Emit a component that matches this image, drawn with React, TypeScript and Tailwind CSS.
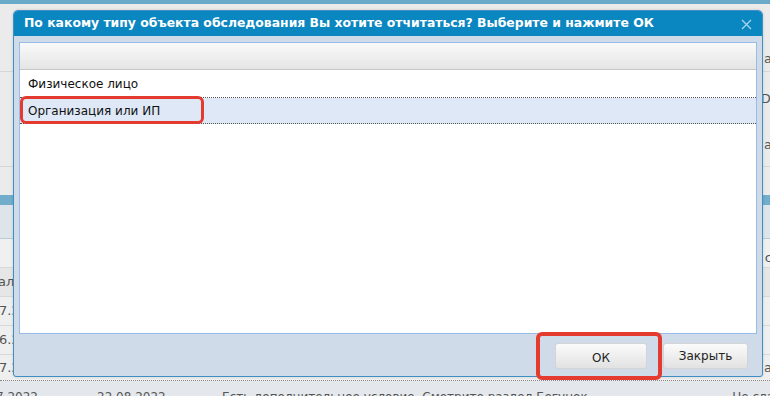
import React from "react";

const F = { fontFamily: '"DejaVu Sans", "Liberation Sans", sans-serif' };

function BgRow({ cls, left, right, leftCls = "", rightCls = "" }: { cls: string; left?: string; right?: string; leftCls?: string; rightCls?: string }) {
  return (
    <div className={`flex justify-between text-[13px] text-[#555] ${cls}`}>
      <span className={leftCls}>{left}</span>
      <span className={rightCls}>{right}</span>
    </div>
  );
}

export default function App() {
  return (
    <div className="relative h-[396px] w-[770px] overflow-hidden bg-[#e9e9e9]" style={F}>
      {/* background page */}
      <div className="flex h-full flex-col">
        <div className="h-[4px] shrink-0 bg-[#6aa9c7]" />
        <div className="h-[40px] shrink-0 bg-[#ebebeb]" />
        <BgRow cls="h-[28px] shrink-0 items-center border-b border-[#d6d6d6] bg-[#ebebeb]" right="а" rightCls="-mr-[2px] pt-[2px]" />
        <BgRow cls="h-[54px] shrink-0 items-center bg-[#ebebeb]" right="D," rightCls="-mr-[5px]" />
        <BgRow cls="h-[41px] shrink-0 items-center border-b border-[#d6d6d6] bg-[#ebebeb]" right="а" rightCls="-mr-[2px] pb-[2px]" />
        <div className="h-[28px] shrink-0 bg-[#ebebeb]" />
        <div className="h-[10px] shrink-0 bg-[#72aecb]" />
        <div className="h-[34px] shrink-0 border-b border-[#b9cad8] bg-[#dde4ea]" />
        <BgRow cls="h-[29px] shrink-0 items-end border-b border-[#d8d8d8] bg-[#f0f0f0]" right="с" rightCls="-mr-[2px] pb-[0px]" />
        <BgRow cls="h-[29px] shrink-0 items-center border-b border-[#d8d8d8] bg-[#e6e6e6]" left="ало" leftCls="-ml-[2px]" />
        <BgRow cls="h-[29px] shrink-0 items-center border-b border-[#d8d8d8] bg-[#efefef]" left="7.2" leftCls="-ml-[1px]" />
        <BgRow cls="h-[29px] shrink-0 items-center border-b border-[#d8d8d8] bg-[#efefef]" left="6.2" leftCls="-ml-[1px]" />
        <BgRow cls="h-[24px] shrink-0 items-center bg-[#efefef]" left="7.2" leftCls="-ml-[1px] pt-[2px]" right="а" rightCls="-mr-[2px] pt-[2px]" />
        <div className="h-[2px] shrink-0 border-b border-dotted border-[#888] bg-[#efefef]" />
        <div className="flex h-[20px] shrink-0 items-start bg-[#e4e8ec] pt-[7px] text-[12px] text-[#555]">
          <span className="-ml-[4px] w-[101px]">7.2022</span>
          <span className="w-[125px]">22.08.2022</span>
          <span>Есть дополнительное условие. Смотрите раздел Бегунок</span>
          <span className="-mr-[4px] ml-auto">Не сла</span>
        </div>
      </div>

      {/* dialog overlay */}
      <div className="absolute left-[13px] top-[10px] flex h-[367px] w-[750px] flex-col rounded-t-[5px] rounded-b-[3px] border border-[#3d8fc4] bg-[#cfdbe8] shadow-[0_0_3px_rgba(0,0,0,0.15)]">
        <div className="flex h-[25px] shrink-0 items-center justify-between rounded-t-[4px] bg-[#0a86c0] pl-[10px] pr-[10px]">
          <span className="text-[12.4px] font-bold text-white">
            По какому типу объекта обследования Вы хотите отчитаться? Выберите и нажмите ОК
          </span>
          <svg width="11" height="11" viewBox="0 0 11 11" className="mt-[1px]">
            <path d="M1 1 L10 10 M10 1 L1 10" stroke="#a9d6ee" strokeWidth="1.3" />
          </svg>
        </div>
        <div className="mx-[5px] mt-[6px] flex h-[292px] flex-col border border-[#99bbe8] bg-white">
          <div className="h-[27px] border-b border-[#c5c5c5] bg-gradient-to-b from-[#f9f9f9] to-[#e5e5e5]" />
          <div className="flex h-[28px] items-center border-b border-dotted border-[#555] pl-[8px] text-[12px] text-[#111]">
            Физическое лицо
          </div>
          <div className="relative flex h-[26px] items-center border-b border-dotted border-[#555] bg-[#dfe8f6] pl-[8px] text-[12px] text-[#111]">
            Организация или ИП
            <div className="absolute left-[0px] top-[-2px] h-[28px] w-[184px] rounded-[6px] border-[3px] border-[#e53a30]" />
          </div>
        </div>
        <div className="flex flex-1 items-center justify-end gap-[16px] pr-[14px] pt-[1px]">
          <div className="relative">
            <button className="h-[26px] w-[92px] rounded-[3px] border border-[#d4d4d4] bg-gradient-to-b from-[#fbfbfb] to-[#e2e2e2] pt-[4px] text-[12px] text-[#222]">
              ОК
            </button>
            <div className="absolute left-[-19px] top-[-11px] h-[48px] w-[126px] rounded-[6px] border-[4px] border-[#e53a30]" />
          </div>
          <button className="h-[26px] w-[85px] rounded-[3px] border border-[#d4d4d4] bg-gradient-to-b from-[#fbfbfb] to-[#e2e2e2] text-[12px] text-[#222]">
            Закрыть
          </button>
        </div>
      </div>
    </div>
  );
}
